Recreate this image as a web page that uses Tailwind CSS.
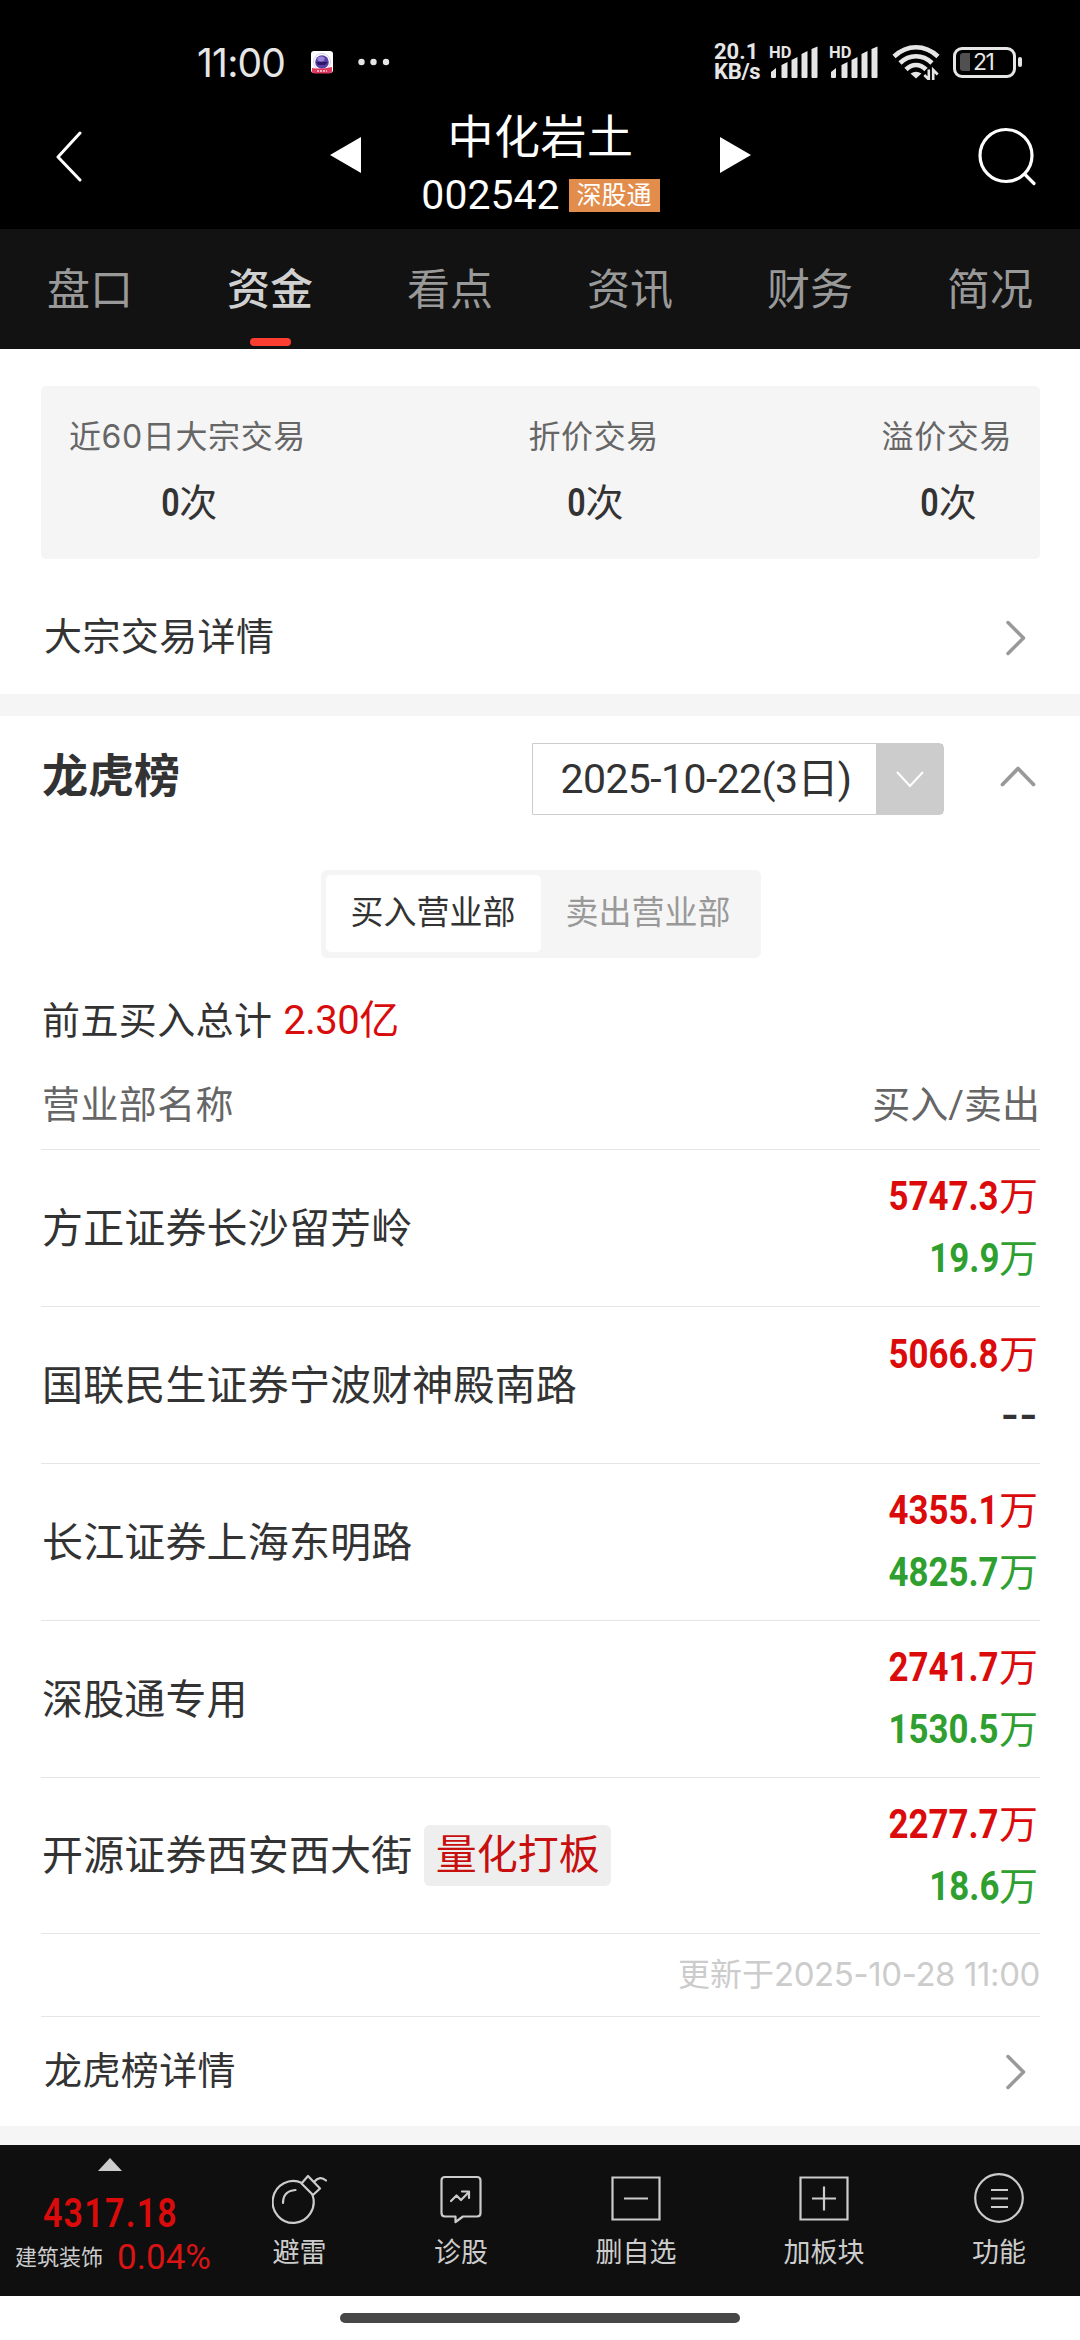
<!DOCTYPE html>
<html lang="zh-CN">
<head>
  <meta charset="UTF-8" />
  <meta name="viewport" content="width=device-width, initial-scale=1.0" />
  <title>中化岩土 002542 - 资金</title>
  <script src="https://cdn.jsdelivr.net/npm/@tailwindcss/browser@4"></script>
</head>
<body class="bg-white">
  <div class="w-[1080px] h-[2340px] overflow-hidden flex flex-col bg-white text-[#333] font-['Roboto','Noto_Sans_CJK_SC',sans-serif] whitespace-nowrap">

    <!-- Status bar -->
    <div class="h-[94px] shrink-0 bg-black flex items-center justify-between pt-[30px] pl-[197px] pr-[58px] text-[#e6e6e6]">
      <div class="flex items-center">
        <span class="font-['Inter'] text-[39px] leading-[40px] tracking-[-0.8px] w-[114px] mt-[2px]">11:00</span>
        <svg class="w-[22px] h-[23px]" viewBox="0 0 22 23">
          <rect width="22" height="22" rx="3" fill="#fff"/>
          <circle cx="11" cy="11" r="8.500" fill="none" stroke="#c9c4dd" stroke-width="0.800"/>
          <circle cx="11" cy="11" r="6.800" fill="#5b3fa8"/>
          <ellipse cx="10" cy="8" rx="3.600" ry="2.400" fill="#9a86d8"/>
          <path d="M5 11h12l-3 3H7z" fill="#2a1a66"/>
          <path d="M1 17q10 1.500 20-1v4q0 2.500-2.500 2.500h-15Q1 22.500 1 20z" fill="#e0375c"/>
          <path d="M6 20h10" stroke="#ffd5dd" stroke-width="1.500" stroke-dasharray="2 1"/>
        </svg>
        <svg class="w-[32px] h-[8px] ml-[25px]" viewBox="0 0 32 8" fill="#e6e6e6">
          <circle cx="3.500" cy="4" r="3.200"/><circle cx="15.500" cy="4" r="3.200"/><circle cx="28" cy="4" r="3.200"/>
        </svg>
      </div>
      <div class="flex items-center">
        <div class="w-[55px] font-bold text-[22px] leading-[20px]">
          <div>20.1</div>
          <div class="tracking-[-0.3px]">KB/s</div>
        </div>
        <svg class="w-[52px] h-[34px] overflow-visible" viewBox="0 0 52 34" fill="#e6e6e6">
          <text x="0" y="13" font-size="16.500" font-weight="700" font-family="Roboto">HD</text>
          <path d="M2 32v-5l5-4v9q0 1-1 1H3q-1 0-1-1zM12.500 32V20l6-3v15q0 1-1 1h-4q-1 0-1-1zM22.500 32V15l6-3v20q0 1-1 1h-4q-1 0-1-1zM32.500 32V9l6-3v26q0 1-1 1h-4q-1 0-1-1zM42.500 32V4l6-2.500V32q0 1-1 1h-4q-1 0-1-1z"/>
        </svg>
        <svg class="w-[52px] h-[34px] ml-[8px] overflow-visible" viewBox="0 0 52 34" fill="#e6e6e6">
          <text x="0" y="13" font-size="16.500" font-weight="700" font-family="Roboto">HD</text>
          <path d="M2 32v-5l5-4v9q0 1-1 1H3q-1 0-1-1zM12.500 32V20l6-3v15q0 1-1 1h-4q-1 0-1-1zM22.500 32V15l6-3v20q0 1-1 1h-4q-1 0-1-1zM32.500 32V9l6-3v26q0 1-1 1h-4q-1 0-1-1zM42.500 32V4l6-2.500V32q0 1-1 1h-4q-1 0-1-1z"/>
        </svg>
        <svg class="w-[48px] h-[36px] ml-[11px]" viewBox="0 0 48 36" fill="none" stroke="#e6e6e6" stroke-width="4.600">
          <path d="M2 12.500Q12 3.300 24 3.300T46 12.500"/>
          <path d="M8 19Q15 12.300 24 12.300T40 19"/>
          <path d="M14 25.500Q18.500 21 24 21T34 25.500"/>
          <path d="M18.500 29.500Q24 26 29.500 29.500L24 34.500z" fill="#e6e6e6" stroke="none"/>
          <path d="M36.800 25.500V35.500l-4.500-4.500M41.200 36V26l4.500 4.500" stroke-width="2.600"/>
        </svg>
        <div class="ml-[13px] w-[63px] h-[31px] rounded-[9px] border-[3px] border-[#e6e6e6] flex items-center pl-[4px]">
          <div class="w-[10px] h-[18px] rounded-l-[3px] bg-[#505050]"></div>
          <span class="ml-[3px] text-[23px] leading-[24px] tracking-[-1.5px] font-['Inter']">21</span>
        </div>
        <div class="ml-[2px] w-[4px] h-[10px] rounded-[2px] bg-[#e6e6e6]"></div>
      </div>
    </div>

    <!-- Title bar -->
    <header class="h-[135px] shrink-0 bg-black flex text-white pl-[56px]">
      <svg class="w-[26px] h-[52px] mt-[37px]" viewBox="0 0 26 52" fill="none" stroke="#fff" stroke-width="3" stroke-linecap="round" stroke-linejoin="round">
        <path d="M24 2L2 26l22 23"/>
      </svg>
      <div class="flex ml-[248px]">
        <svg class="w-[31px] h-[36px] mt-[43px]" viewBox="0 0 32 36" preserveAspectRatio="none"><path d="M0 18L32 0v36z" fill="#fff"/></svg>
        <div class="w-[359px] flex flex-col items-center">
          <h1 class="text-[46px] leading-[56px] mt-[15px] tracking-[0.5px]">中化岩土</h1>
          <div class="flex items-center h-[34px] mt-[13px]">
            <span class="text-[41px] leading-[40px]">002542</span>
            <span class="ml-[9px] w-[91px] h-[33px] bg-[#e28d4b] text-[25px] leading-[33px] text-center">深股通</span>
          </div>
        </div>
        <svg class="w-[31px] h-[36px] mt-[43px]" viewBox="0 0 32 36" preserveAspectRatio="none"><path d="M32 18L0 0v36z" fill="#fff"/></svg>
      </div>
      <svg class="w-[60px] h-[60px] mt-[32px] ml-[226px]" viewBox="0 0 60 60" fill="none" stroke="#fff" stroke-width="3.200" stroke-linecap="round">
        <circle cx="29" cy="29.500" r="26"/><path d="M48 48.500l9 9"/>
      </svg>
    </header>

    <!-- Tabs -->
    <nav class="h-[120px] shrink-0 bg-[#121212] grid grid-cols-6 text-center text-[43px] leading-[123px] text-[#999]">
      <a>盘口</a>
      <a class="relative text-[#d0d0d0] font-medium">资金<i class="absolute left-[70px] top-[109px] w-[41px] h-[8px] rounded-full bg-[#fb3d32]"></i></a>
      <a>看点</a>
      <a>资讯</a>
      <a>财务</a>
      <a>简况</a>
    </nav>

    <!-- Block trades -->
    <section class="h-[345px] shrink-0 pt-[37px] pl-[41px] pr-[40px]">
      <div class="h-[173px] rounded-[5px] bg-[#f5f5f5] flex justify-between px-[28px] text-center">
        <div>
          <p class="mt-[31px] text-[32px] leading-[40px] text-[#666] tracking-[0.6px]">近<span class="font-['Inter']">60</span>日大宗交易</p>
          <p class="mt-[26px] text-[38px] leading-[40px]"><b class="inline-block origin-right scale-x-85 font-semibold">0</b>次</p>
        </div>
        <div>
          <p class="mt-[31px] text-[32px] leading-[40px] text-[#666] tracking-[0.6px]">折价交易</p>
          <p class="mt-[26px] text-[38px] leading-[40px]"><b class="inline-block origin-right scale-x-85 font-semibold">0</b>次</p>
        </div>
        <div>
          <p class="mt-[31px] text-[32px] leading-[40px] text-[#666] tracking-[0.6px]">溢价交易</p>
          <p class="mt-[26px] text-[38px] leading-[40px]"><b class="inline-block origin-right scale-x-85 font-semibold">0</b>次</p>
        </div>
      </div>
      <a class="flex items-center justify-between h-[135px] pt-[22px] pl-[3px] pr-[13px] text-[38px] tracking-[0.4px]">
        大宗交易详情
        <svg class="w-[22px] h-[36px]" viewBox="0 0 22 36" fill="none" stroke="#999" stroke-width="3.500" stroke-linecap="round" stroke-linejoin="round"><path d="M3 2.500L18.500 18 3 33.500"/></svg>
      </a>
    </section>
    <div class="h-[22px] shrink-0 bg-[#f5f5f5]"></div>

    <!-- Dragon-tiger list -->
    <section class="h-[1410px] shrink-0 pl-[41px] pr-[40px]">
      <div class="flex items-center h-[126px]">
        <h2 class="text-[46px] leading-[56px] font-bold mt-[-6px] ml-[1px] flex-1">龙虎榜</h2>
        <div class="flex w-[412px] h-[72px] border border-[#ccc] rounded-r-[5px]">
          <div class="flex-1 text-center pl-[3px] text-[41px] leading-[71px] tracking-[-0.6px]">2025-10-22(3日)</div>
          <div class="w-[67px] bg-[#ccc] flex items-center justify-center">
            <svg class="w-[28px] h-[17px]" viewBox="0 0 28 17" fill="none" stroke="#fff" stroke-width="2"><path d="M1 1l13 14L27 1"/></svg>
          </div>
        </div>
        <svg class="w-[36px] h-[22px] ml-[56px] mr-[4px] mb-[6px]" viewBox="0 0 36 22" fill="none" stroke="#999" stroke-width="3.800" stroke-linecap="round" stroke-linejoin="round"><path d="M2.500 19.500L18 3.500l15.500 16"/></svg>
      </div>

      <div class="flex w-[440px] h-[88px] mt-[28px] mx-auto p-[5px] pb-[6px] rounded-[6px] bg-[#f5f5f5] text-[33px] leading-[76px] text-center">
        <div class="w-[215px] rounded-[5px] bg-white">买入营业部</div>
        <div class="flex-1 text-[#999]">卖出营业部</div>
      </div>

      <p class="h-[50px] mt-[38px] pl-[1px] text-[38px] leading-[50px] tracking-[0.4px]">前五买入总计 <span class="ml-[1px] text-[40px] tracking-[-0.5px] text-[#d90c0c]">2.30亿</span></p>

      <div class="flex justify-between h-[104px] pl-[1px] pt-[35px] text-[38px] leading-[48px] text-[#666] border-b border-[#e5e5e5]">
        <span class="tracking-[0.4px]">营业部名称</span>
        <span>买入/卖出</span>
      </div>

      <div class="flex items-center justify-between h-[157px] pl-[1px] pr-[2px] border-b border-[#e5e5e5] text-[41px]">
        <span class="pt-[3px] tracking-[0.15px]">方正证券长沙留芳岭</span>
        <div class="text-right text-[39px] leading-[61px]">
          <p class="text-[#dc0b0b]"><b class="inline-block origin-right scale-x-85 text-[41px] font-bold">5747.3</b>万</p>
          <p class="text-[#2fa02f]"><b class="inline-block origin-right scale-x-85 text-[41px] font-bold">19.9</b>万</p>
        </div>
      </div>
      <div class="flex items-center justify-between h-[157px] pl-[1px] pr-[2px] border-b border-[#e5e5e5] text-[41px]">
        <span class="pt-[3px] tracking-[0.15px]">国联民生证券宁波财神殿南路</span>
        <div class="text-right text-[39px] leading-[61px]">
          <p class="text-[#dc0b0b]"><b class="inline-block origin-right scale-x-85 text-[41px] font-bold">5066.8</b>万</p>
          <p class="font-bold"><span class="inline-block origin-right scale-x-120">--</span></p>
        </div>
      </div>
      <div class="flex items-center justify-between h-[157px] pl-[1px] pr-[2px] border-b border-[#e5e5e5] text-[41px]">
        <span class="pt-[3px] tracking-[0.15px]">长江证券上海东明路</span>
        <div class="text-right text-[39px] leading-[61px]">
          <p class="text-[#dc0b0b]"><b class="inline-block origin-right scale-x-85 text-[41px] font-bold">4355.1</b>万</p>
          <p class="text-[#2fa02f]"><b class="inline-block origin-right scale-x-85 text-[41px] font-bold">4825.7</b>万</p>
        </div>
      </div>
      <div class="flex items-center justify-between h-[157px] pl-[1px] pr-[2px] border-b border-[#e5e5e5] text-[41px]">
        <span class="pt-[3px] tracking-[0.15px]">深股通专用</span>
        <div class="text-right text-[39px] leading-[61px]">
          <p class="text-[#dc0b0b]"><b class="inline-block origin-right scale-x-85 text-[41px] font-bold">2741.7</b>万</p>
          <p class="text-[#2fa02f]"><b class="inline-block origin-right scale-x-85 text-[41px] font-bold">1530.5</b>万</p>
        </div>
      </div>
      <div class="flex items-center justify-between h-[156px] pl-[1px] pr-[2px] border-b border-[#e5e5e5] text-[41px]">
        <div class="flex items-center">
          <span class="pt-[3px] tracking-[0.15px]">开源证券西安西大街</span>
          <span class="ml-[12px] w-[187px] h-[61px] rounded-[6px] bg-[#eee] text-[#c80f0f] leading-[61px] text-center">量化打板</span>
        </div>
        <div class="text-right text-[39px] leading-[61px]">
          <p class="text-[#dc0b0b]"><b class="inline-block origin-right scale-x-85 text-[41px] font-bold">2277.7</b>万</p>
          <p class="text-[#2fa02f]"><b class="inline-block origin-right scale-x-85 text-[41px] font-bold">18.6</b>万</p>
        </div>
      </div>

      <p class="h-[83px] text-right text-[32px] leading-[80px] text-[#ccc] border-b border-[#e5e5e5]">更新于<span class="font-['Inter'] text-[33px] tracking-[-0.4px]">2025-10-28 11:00</span></p>
      <a class="flex items-center justify-between h-[109px] pl-[3px] pr-[13px] text-[38px] tracking-[0.4px]">
        龙虎榜详情
        <svg class="w-[22px] h-[36px]" viewBox="0 0 22 36" fill="none" stroke="#999" stroke-width="3.500" stroke-linecap="round" stroke-linejoin="round"><path d="M3 2.500L18.500 18 3 33.500"/></svg>
      </a>
    </section>
    <div class="h-[19px] shrink-0 bg-[#f5f5f5]"></div>

    <!-- Bottom toolbar -->
    <footer class="h-[151px] shrink-0 bg-[#0f0f0f] flex text-[#ccc] text-[27px]">
      <div class="w-[220px] flex flex-col items-center">
        <svg class="w-[24px] h-[13px] mt-[13px]" viewBox="0 0 24 13"><path d="M12 0l12 13H0z" fill="#ccc"/></svg>
        <b class="mt-[23px] text-[40px] leading-[40px] font-semibold text-[#dc0b0b]"><span class="inline-block scale-x-85 tracking-[1.5px]">4317.18</span></b>
        <div class="flex items-center mt-[7px] pl-[6px] w-full justify-center">
          <span class="text-[22px] leading-[34px]">建筑装饰</span>
          <span class="ml-[14px] text-[35px] leading-[34px] text-[#d81414]">0.04%</span>
        </div>
      </div>
      <div class="w-[159px] flex flex-col items-center pt-[28px]">
        <svg class="w-[56px] h-[54px]" viewBox="0 0 56 54" fill="none" stroke="#ccc" stroke-width="2.200" stroke-linecap="round" stroke-linejoin="round">
          <path d="M30 10A20.500 21 0 1 0 40.500 22"/><path d="M11 30Q11 18 23.500 17M29.500 10.500L36 3l12 12.500-7 6.500zM42 9Q48 2 54 7.500"/>
        </svg>
        <span class="mt-[10px] leading-[32px]">避雷</span>
      </div>
      <div class="w-[164px] flex flex-col items-center pt-[28px]">
        <svg class="w-[42px] h-[54px]" viewBox="0 0 42 54" fill="none" stroke="#ccc" stroke-width="2.200" stroke-linecap="round" stroke-linejoin="round">
          <path d="M5 4h32q3.500 0 3.500 3.500V40q0 3.500-3.500 3.500H23L15.500 49v-5.500H5Q1.500 43.500 1.500 40V7.500Q1.500 4 5 4z"/><path d="M11 28l5.500-5.500 4.500 4.500 8-8M22 18.500h7v6.500"/>
        </svg>
        <span class="mt-[10px] leading-[32px]">诊股</span>
      </div>
      <div class="w-[186px] flex flex-col items-center pt-[28px]">
        <svg class="w-[50px] h-[54px]" viewBox="0 0 50 54" fill="none" stroke="#ccc" stroke-width="2.200"><path d="M1.500 4.500h47v42h-47zM13 25.500h24"/></svg>
        <span class="mt-[10px] leading-[32px]">删自选</span>
      </div>
      <div class="w-[190px] flex flex-col items-center pt-[28px]">
        <svg class="w-[50px] h-[54px]" viewBox="0 0 50 54" fill="none" stroke="#ccc" stroke-width="2.200"><path d="M1.500 4.500h47v42h-47zM13 25.500h24M25 13.500v24"/></svg>
        <span class="mt-[10px] leading-[32px]">加板块</span>
      </div>
      <div class="w-[160px] flex flex-col items-center pt-[28px]">
        <svg class="w-[50px] h-[54px]" viewBox="0 0 50 54" fill="none" stroke="#ccc" stroke-width="2.200"><circle cx="25" cy="25" r="23.800"/><path d="M17 17h17M17 25.500h17M17 34h17"/></svg>
        <span class="mt-[10px] leading-[32px]">功能</span>
      </div>
    </footer>

    <!-- Home indicator -->
    <div class="mx-auto mt-[17px] w-[400px] h-[10px] shrink-0 rounded-full bg-[#474747]"></div>
  </div>
</body>
</html>
